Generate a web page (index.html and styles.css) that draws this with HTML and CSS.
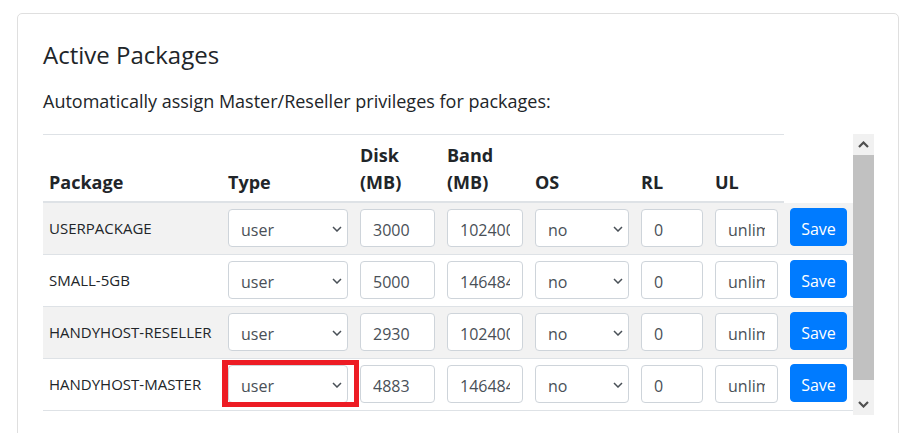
FILE: index.html
```html
<!DOCTYPE html>
<html lang="en">
<head>
<meta charset="utf-8">
<title>Active Packages</title>
<link rel="stylesheet" href="styles.css">
</head>
<body>
<div class="card">
  <div class="card-body">
    <h2 class="title">Active Packages</h2>
    <p class="lead">Automatically assign Master/Reseller privileges for packages:</p>
    <div class="scroll">
      <div class="scroll-view">
        <table class="pkg-table">
          <colgroup>
            <col class="c-pkg"><col class="c-type"><col class="c-disk"><col class="c-band"><col class="c-os"><col class="c-rl"><col class="c-ul"><col class="c-save">
          </colgroup>
          <thead>
            <tr>
              <th>Package</th>
              <th>Type</th>
              <th>Disk<br>(MB)</th>
              <th>Band<br>(MB)</th>
              <th>OS</th>
              <th>RL</th>
              <th>UL</th>
            </tr>
          </thead>
          <tbody>
            <tr class="striped">
              <td class="name">USERPACKAGE</td>
              <td><div class="select-wrap"><select class="field"><option>user</option></select><svg class="chev" viewBox="0 0 10 6"><polyline points="1,1 5,5 9,1"/></svg></div></td>
              <td><input class="field" value="3000"></td>
              <td><input class="field" value="102400"></td>
              <td><div class="select-wrap"><select class="field"><option>no</option></select><svg class="chev" viewBox="0 0 10 6"><polyline points="1,1 5,5 9,1"/></svg></div></td>
              <td><input class="field" value="0"></td>
              <td><input class="field" value="unlimited"></td>
              <td><button class="btn">Save</button></td>
            </tr>
            <tr>
              <td class="name">SMALL-5GB</td>
              <td><div class="select-wrap"><select class="field"><option>user</option></select><svg class="chev" viewBox="0 0 10 6"><polyline points="1,1 5,5 9,1"/></svg></div></td>
              <td><input class="field" value="5000"></td>
              <td><input class="field" value="146484"></td>
              <td><div class="select-wrap"><select class="field"><option>no</option></select><svg class="chev" viewBox="0 0 10 6"><polyline points="1,1 5,5 9,1"/></svg></div></td>
              <td><input class="field" value="0"></td>
              <td><input class="field" value="unlimited"></td>
              <td><button class="btn">Save</button></td>
            </tr>
            <tr class="striped">
              <td class="name">HANDYHOST-RESELLER</td>
              <td><div class="select-wrap"><select class="field"><option>user</option></select><svg class="chev" viewBox="0 0 10 6"><polyline points="1,1 5,5 9,1"/></svg></div></td>
              <td><input class="field" value="2930"></td>
              <td><input class="field" value="102400"></td>
              <td><div class="select-wrap"><select class="field"><option>no</option></select><svg class="chev" viewBox="0 0 10 6"><polyline points="1,1 5,5 9,1"/></svg></div></td>
              <td><input class="field" value="0"></td>
              <td><input class="field" value="unlimited"></td>
              <td><button class="btn">Save</button></td>
            </tr>
            <tr>
              <td class="name">HANDYHOST-MASTER</td>
              <td><div class="select-wrap"><select class="field"><option>user</option></select><svg class="chev" viewBox="0 0 10 6"><polyline points="1,1 5,5 9,1"/></svg><span class="highlight"></span></div></td>
              <td><input class="field" value="4883"></td>
              <td><input class="field" value="146484"></td>
              <td><div class="select-wrap"><select class="field"><option>no</option></select><svg class="chev" viewBox="0 0 10 6"><polyline points="1,1 5,5 9,1"/></svg></div></td>
              <td><input class="field" value="0"></td>
              <td><input class="field" value="unlimited"></td>
              <td><button class="btn">Save</button></td>
            </tr>
          </tbody>
        </table>
      </div>
      <div class="scrollbar">
        <div class="sb-btn"><svg viewBox="0 0 11 7"><polyline points="1,6 5.5,1.5 10,6"/></svg></div>
        <div class="sb-thumb"></div>
        <div class="sb-track"></div>
        <div class="sb-btn"><svg viewBox="0 0 11 7"><polyline points="1,1 5.5,5.5 10,1"/></svg></div>
      </div>
    </div>
  </div>
</div>
</body>
</html>
```

FILE: styles.css
```css
* { box-sizing: border-box; }

html, body {
  margin: 0;
  background: #ffffff;
}

body {
  padding: 13px 14px 0 17px;
  font-family: "Open Sans", "Noto Sans", sans-serif;
  color: #212529;
  overflow: hidden;
}

.card {
  width: 882px;
  border: 1px solid #dfdfdf;
  border-radius: 5px;
  background: #fff;
}

.card-body {
  padding: 27px 24px 25px 25px;
}

.title {
  margin: 0 0 18px;
  font-size: 24px;
  font-weight: 400;
  line-height: 28.8px;
}

.lead {
  margin: 0 0 19px;
  font-size: 18px;
  line-height: 27px;
}

.scroll {
  display: flex;
  height: 281px;
}

.scroll-view {
  width: 810px;
  overflow: hidden;
}

.pkg-table {
  width: 810px;
  table-layout: fixed;
  border-collapse: separate;
  border-spacing: 0;
  margin-bottom: 16px;
}

.c-pkg { width: 179px; }
.c-type { width: 132px; }
.c-disk { width: 87px; }
.c-band { width: 88px; }
.c-os { width: 106px; }
.c-rl { width: 74px; }
.c-ul { width: 75px; }
.c-save { width: 69px; }

.pkg-table th {
  text-align: left;
  vertical-align: bottom;
  font-size: 18px;
  font-weight: 700;
  line-height: 27px;
  padding: 7px 6px 5px;
  border-top: 1px solid #dee2e6;
  border-bottom: 2px solid #dee2e6;
}

.pkg-table td {
  padding: 6px 6px 7px;
  vertical-align: middle;
  border-bottom: 1px solid #dee2e6;
}

.pkg-table tr.striped td {
  background: #f2f2f2;
}

.name {
  font-size: 15px;
  white-space: nowrap;
}

.field {
  display: block;
  width: 100%;
  height: 38px;
  margin: 0;
  padding: 8px 12px 4px;
  font-family: "Open Sans", "Noto Sans", sans-serif;
  font-size: 16px;
  line-height: 24px;
  color: #495057;
  background: #fff;
  border: 1px solid #ced4da;
  border-radius: 4px;
  outline: none;
}

select.field {
  appearance: none;
  -webkit-appearance: none;
  padding-right: 24px;
}

.select-wrap {
  position: relative;
}

.chev {
  position: absolute;
  right: 6px;
  top: 17px;
  width: 10px;
  height: 6px;
  fill: none;
  stroke: #495057;
  stroke-width: 1.5;
  pointer-events: none;
}

.highlight {
  position: absolute;
  left: -6px;
  top: -5px;
  width: 137px;
  height: 47px;
  border: 5px solid #ed1c24;
  border-left-width: 6px;
  pointer-events: none;
}

.btn {
  display: block;
  width: 57px;
  height: 38px;
  margin-top: -1px;
  padding: 3px 0 0;
  font-family: "Open Sans", "Noto Sans", sans-serif;
  font-size: 16px;
  color: #fff;
  background: #007bff;
  border: 1px solid #007bff;
  border-radius: 4px;
}

.scrollbar {
  width: 21px;
  display: flex;
  flex-direction: column;
  background: #f1f1f1;
}

.sb-btn {
  height: 21px;
  display: flex;
  align-items: center;
  justify-content: center;
}

.sb-btn svg {
  width: 11px;
  height: 7px;
  fill: none;
  stroke: #505050;
  stroke-width: 2.2;
}

.sb-thumb {
  height: 225px;
  background: #c1c1c1;
}

.sb-track {
  flex: 1;
}
```
